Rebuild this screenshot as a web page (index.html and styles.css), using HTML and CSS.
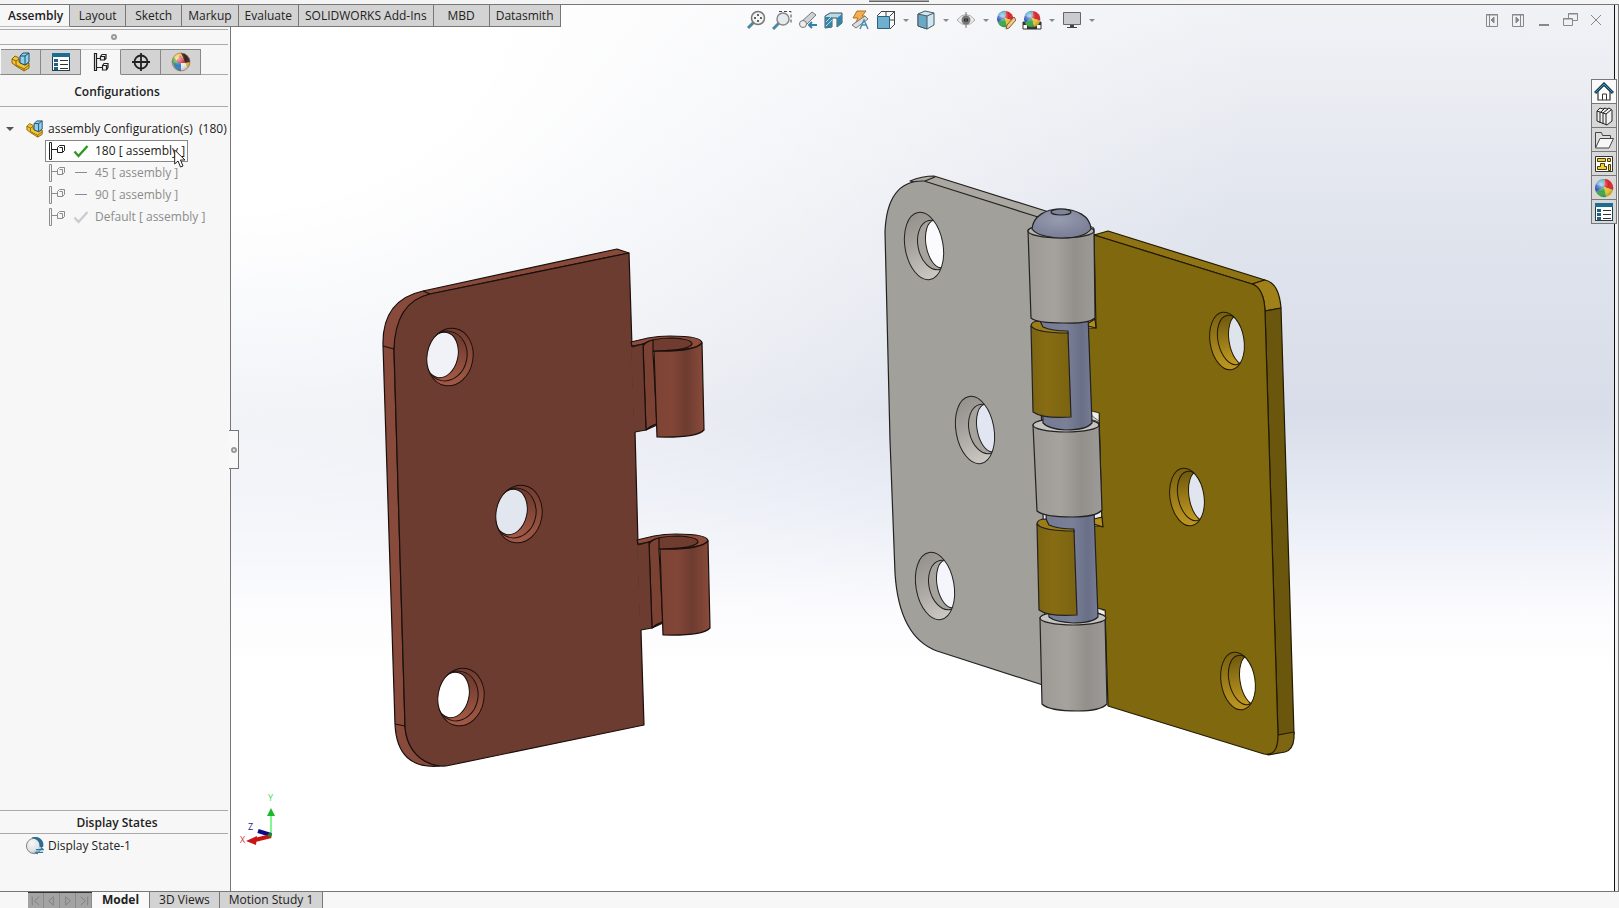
FILE: index.html
```html
<!DOCTYPE html>
<html lang="en">
<head>
<meta charset="utf-8">
<title>Assembly</title>
<link rel="stylesheet" href="styles.css">
</head>
<body>
<svg class="defs" aria-hidden="true">
  <defs>
    <radialGradient id="ballShade" cx=".35" cy=".3" r=".8"><stop offset="0" stop-color="#fff" stop-opacity=".65"/><stop offset=".5" stop-color="#fff" stop-opacity="0"/><stop offset="1" stop-color="#000" stop-opacity=".35"/></radialGradient>
    <symbol id="i-ball" viewBox="0 0 20 20"><path d="M10 9 2 6A9 9 0 0 1 11 1Z" fill="#3f9fc4"/><path d="M10 9 11 1A9 9 0 0 1 19 12Z" fill="#d8232a"/><path d="M10 9 19 12A9 9 0 0 1 12 19Z" fill="#e8c52e"/><path d="M10 9 12 19A9 9 0 0 1 2 14Z" fill="#3aa648"/><path d="M10 9 2 14A9 9 0 0 1 2 6Z" fill="#2e55b8"/><circle cx="10" cy="10" r="9" fill="url(#ballShade)"/></symbol>
    <symbol id="i-appear" viewBox="0 0 20 20"><circle cx="10" cy="10" r="9" fill="#e8c52e"/><path d="M10 1a9 9 0 0 1 9 9l-5 1Z" fill="#312023"/><path d="M9 3 15 11H4Z" fill="#d9283a"/><path d="M2 11h8v8A9 9 0 0 1 2 11Z" fill="#2f7fc0"/><path d="M1 10A9 9 0 0 1 3 5l4 6H1Z" fill="#4aa84e"/><path d="M10 11h4l3 5a9 9 0 0 1-7 3Z" fill="#e9ecef"/><circle cx="10" cy="10" r="9" fill="url(#ballShade)" stroke="#a4573c" stroke-width=".6"/></symbol>
    <symbol id="i-asm" viewBox="0 0 20 20"><path d="M1 7 4 4l4 2v4l6 3 4-2v5l-5 3-8-5-4-3Z" fill="#f4c430" stroke="#8a6508"/><path d="M1 7 5 9v4l8 4v2M13 17l5-4M5 9l3-2" fill="none" stroke="#8a6508"/><path d="M9 4 12 1h6v9l-4 3-5-2Z" fill="#8fd0ee" stroke="#1d4c68"/><path d="M9 4h5v9M14 4l4-3" fill="none" stroke="#1d4c68"/></symbol>
    <symbol id="i-list" viewBox="0 0 20 20"><rect x="1.500" y="1.500" width="17" height="17" fill="#fff" stroke="#1e4056"/><path d="M1 1h18v4H1Z" fill="#1d6d92"/><path d="M3 7h4v3H3Zm0 4h4v3H3Zm0 4h4v3H3Z" fill="#23607e"/><path d="M9 8.500h8M9 12.500h8M9 16.500h8" stroke="#333"/></symbol>
    <symbol id="i-conf" viewBox="0 0 20 20"><g fill="none" stroke="currentColor" stroke-width="1.200"><path d="M3.500 1v18M5.500 1v18M3 1.500h3M3 18.500h3M6 6.500h4M6 15.500h5"/><path d="M9.500 4.500 11 2.500h4v4L13.500 8h-4ZM9.500 4.500h4V8M11.500 13.500l1.500-2h4v4L15.500 18h-4ZM11.500 13.500h4V18"/></g></symbol>
    <symbol id="i-node" viewBox="0 0 18 18"><path d="M1.500.5h2v17h-2ZM4 7.500h5M9.500 5.500l2-2h5v5l-2 2h-5ZM11.500 5.500h3v5" fill="none" stroke="currentColor"/></symbol>
    <symbol id="i-target" viewBox="0 0 20 20"><circle cx="10" cy="10" r="6.500" fill="none" stroke="#222" stroke-width="1.800"/><path d="M10 1v18M1 10h18" stroke="#222" stroke-width="1.800"/></symbol>
    <symbol id="i-check" viewBox="0 0 16 16"><path d="M1.500 8.500 5.500 13 14.500 3" fill="none" stroke="currentColor" stroke-width="2.400"/></symbol>
    <symbol id="i-dash" viewBox="0 0 16 16"><path d="M2 7.500h12" stroke="currentColor"/></symbol>
  </defs>
</svg>

<header class="strip"><span class="strip-item"></span></header>

<main class="workspace">
  <nav class="ribbon">
    <button class="rtab rtab-active">Assembly</button><button class="rtab">Layout</button><button class="rtab">Sketch</button><button class="rtab">Markup</button><button class="rtab">Evaluate</button><button class="rtab">SOLIDWORKS Add-Ins</button><button class="rtab">MBD</button><button class="rtab">Datasmith</button>
  </nav>

  <aside class="panel">
    <div class="grip"><span class="dot"></span></div>
    <div class="ptabs">
      <button class="ptab" aria-label="Feature tree"><svg><use href="#i-asm"/></svg></button>
      <button class="ptab" aria-label="Properties"><svg><use href="#i-list"/></svg></button>
      <button class="ptab ptab-active" aria-label="Configurations"><svg><use href="#i-conf"/></svg></button>
      <button class="ptab" aria-label="Dimensions"><svg><use href="#i-target"/></svg></button>
      <button class="ptab" aria-label="Appearances"><svg><use href="#i-appear"/></svg></button>
    </div>
    <h2 class="title">Configurations</h2>
    <ul class="tree">
      <li class="root"><span class="twist"></span><svg class="big"><use href="#i-asm"/></svg><span>assembly Configuration(s)&nbsp; (180)</span></li>
      <li class="node node-on"><svg class="ico"><use href="#i-node"/></svg><svg class="mark mark-ok"><use href="#i-check"/></svg><span>180 [ assembly ]</span></li>
      <li class="node"><svg class="ico"><use href="#i-node"/></svg><svg class="mark"><use href="#i-dash"/></svg><span>45 [ assembly ]</span></li>
      <li class="node"><svg class="ico"><use href="#i-node"/></svg><svg class="mark"><use href="#i-dash"/></svg><span>90 [ assembly ]</span></li>
      <li class="node"><svg class="ico"><use href="#i-node"/></svg><svg class="mark mark-dim"><use href="#i-check"/></svg><span>Default [ assembly ]</span></li>
    </ul>
    <section class="states">
      <h2 class="title title-low">Display States</h2>
      <div class="state"><svg class="big" viewBox="0 0 20 20"><circle cx="9" cy="10" r="8.500" fill="#e3e7ea" stroke="#777"/><circle cx="9" cy="10" r="8" fill="url(#ballShade)"/><path d="M6 1a9 9 0 0 1 13 10l-4 0a9 9 0 0 0-9-10Z" fill="#2c6d8f"/><path d="M11 14h8l-2-2M19 17h-8l2 2" fill="none" stroke="#287ba7" stroke-width="1.500"/></svg><span>Display State-1</span></div>
    </section>
    <svg class="cursor" viewBox="0 0 12 19"><path d="M.7 1v14l3.300-3 2.500 6 2.500-1-2.500-6H11Z" fill="#fff" stroke="#222"/></svg>
  </aside>

  <section class="viewport">
    <svg class="scene" viewBox="231 5 1383 886" role="img" aria-label="Hinge assembly">
      <defs>
        <linearGradient id="redCyl"><stop offset="0" stop-color="#7d4334"/><stop offset=".35" stop-color="#824637"/><stop offset=".65" stop-color="#6d3c30"/><stop offset="1" stop-color="#8b4b3b"/></linearGradient>
        <linearGradient id="greyCyl"><stop offset="0" stop-color="#9d9a96"/><stop offset=".4" stop-color="#a6a39f"/><stop offset=".7" stop-color="#93908c"/><stop offset="1" stop-color="#9d9b97"/></linearGradient>
        <linearGradient id="pinCyl"><stop offset="0" stop-color="#747a93"/><stop offset=".5" stop-color="#7b8099"/><stop offset=".8" stop-color="#6a6f88"/><stop offset="1" stop-color="#777c94"/></linearGradient>
        <linearGradient id="goldCyl"><stop offset="0" stop-color="#7c6411"/><stop offset=".4" stop-color="#876c13"/><stop offset="1" stop-color="#7b6310"/></linearGradient>
        <linearGradient id="greyHole" x1="0" y1="0" x2=".4" y2="1"><stop offset="0" stop-color="#8b8884"/><stop offset=".5" stop-color="#a5a29e"/><stop offset="1" stop-color="#cbc8c4"/></linearGradient>
        <linearGradient id="redHole" x1="0" y1="0" x2="0" y2="1"><stop offset="0" stop-color="#6a382c"/><stop offset="1" stop-color="#a65b48"/></linearGradient>
        <linearGradient id="goldHole" x1="0" y1="0" x2="0" y2="1"><stop offset="0" stop-color="#6f590e"/><stop offset="1" stop-color="#c49c22"/></linearGradient>
        <radialGradient id="dome" cx=".45" cy=".35" r=".7"><stop offset="0" stop-color="#979cb0"/><stop offset="1" stop-color="#777c94"/></radialGradient>
        <clipPath id="cr"><ellipse cx="450" cy="357" rx="23" ry="29" transform="rotate(10 450 357)"/></clipPath>
        <clipPath id="cg"><ellipse cx="924" cy="246" rx="19" ry="34" transform="rotate(-10 924 246)"/></clipPath>
        <clipPath id="cy"><ellipse cx="1227" cy="341" rx="17" ry="29" transform="rotate(-9 1227 341)"/></clipPath>
        <g id="redRing"><g clip-path="url(#cr)"><path d="M420 320h60v70h-60Z" fill="url(#redHole)"/><ellipse cx="446" cy="356" rx="21" ry="25" fill="url(#redHole)" stroke="#1a0f0c" transform="rotate(10 446 356)"/><ellipse cx="442" cy="355" rx="16" ry="23" fill="currentColor" stroke="#1a0f0c" transform="rotate(12 442 355)"/></g><ellipse cx="450" cy="357" rx="23" ry="29" fill="none" stroke="#1a0f0c" transform="rotate(10 450 357)"/></g>
        <g id="greyRing"><g clip-path="url(#cg)"><path d="M900 205h50v80h-50Z" fill="url(#greyHole)"/><ellipse cx="934" cy="245" rx="16" ry="25" fill="#a5a39c" stroke="#222" transform="rotate(-12 934 245)"/><ellipse cx="938" cy="244" rx="12" ry="24" fill="currentColor" stroke="#222" transform="rotate(-10 938 244)"/></g><ellipse cx="924" cy="246" rx="19" ry="34" fill="none" stroke="#222" transform="rotate(-10 924 246)"/></g>
        <g id="goldRing"><g clip-path="url(#cy)"><path d="M1205 305h45v70h-45Z" fill="url(#goldHole)"/><ellipse cx="1232" cy="340" rx="14" ry="25" fill="url(#goldHole)" stroke="#221a00" transform="rotate(-12 1232 340)"/><ellipse cx="1241" cy="340" rx="12" ry="25" fill="currentColor" stroke="#221a00" transform="rotate(-9 1241 340)"/></g><ellipse cx="1227" cy="341" rx="17" ry="29" fill="none" stroke="#221a00" transform="rotate(-9 1227 341)"/></g>
        <g id="redKnuckle">
          <path d="M632 346 631 342 648 338Q658 336 670 336Q702 336 702 343Q701 350 654 351L643 344Z" fill="#8e4c3b"/>
          <path d="M643 344Q652 338 672 338Q692 339 692 344Q690 350 658 351L643 352Z" fill="#6f3c2f"/>
          <path d="M643 346Q647 341 653 340V352L657 425 646 430Z" fill="#7b4234"/>
          <path d="M631 347 643 344 646 430 634 432Z" fill="#6d3c30" stroke="none"/>
          <path d="M632 347 643 344 646 430 635 432" fill="none"/>
          <path d="M646 430Q650 426 656 424"/>
          <path d="M654 351Q694 352 702 343L704 430Q697 438 657 437Z" fill="url(#redCyl)"/>
        </g>
        <g id="wrap">
          <path d="M1031 326Q1031 321 1040 321L1043 327Q1052 331 1068 331V334Q1035 333 1031 326Z" fill="#9b7c15"/>
          <path d="M1031 326Q1036 333 1068 333L1071 417Q1043 419 1033 412Z" fill="url(#goldCyl)"/>
        </g>
      </defs>

      <g stroke="#1a0f0c" stroke-width="1.200" stroke-linejoin="round">
        <path d="M617 249 629 253 430 294Q398 302 394 350L405 726Q407 759 440 766Q397 770 395 724L383 345Q382 300 423 291Z" fill="#874a3b"/>
        <path d="M629 253 632 347 635 431 638 544 641 631 644 725 446 766Q432 767 420 758Q406 746 405 726L394 350Q395 302 430 294Z" fill="#6d3c30"/>
        <path d="M383 346 394 349M395 724 405 726M423 291 430 294" fill="none"/>
        <use href="#redKnuckle"/>
        <use href="#redKnuckle" transform="translate(6 198)"/>
      </g>
      <use href="#redRing" color="#f0f2f7"/>
      <use href="#redRing" color="#e2e6ee" transform="translate(69 157)"/>
      <use href="#redRing" color="#fff" transform="translate(11 340)"/>

      <g stroke="#222" stroke-width="1.200" stroke-linejoin="round">
        <path d="M910 181Q922 176 934 176L1049 212 1038 218 923 184Z" fill="#aaa8a0"/>
        <path d="M925 181 935 177" fill="none"/>
        <path d="M924 181 1038 217 1046 686 937 651Q899 637 895 573L890 440 885 232Q887 180 924 181Z" fill="#a2a09b"/>
      </g>
      <use href="#greyRing" color="#fbfbfd"/>
      <use href="#greyRing" color="#e2e6f2" transform="translate(51 184)"/>
      <use href="#greyRing" color="#f4f6fc" transform="translate(11 340)"/>

      <g stroke="#221a00" stroke-width="1.200" stroke-linejoin="round">
        <path d="M1094 235 1108 231 1265 280 1252 284Z" fill="#8f7315"/>
        <path d="M1252 284 1265 280Q1279 283 1281 308L1265 311Q1264 288 1252 284Z" fill="#a08018"/>
        <path d="M1265 311 1281 308 1294 734 1278 735Z" fill="#6b560d"/>
        <path d="M1278 735 1294 732V738Q1293 750 1285 752L1268 755Z" fill="#7e6512"/>
        <path d="M1094 235 1252 284Q1264 288 1265 311L1278 735Q1278 757 1264 754L1108 706 1105 610 1097 608 1094 526 1102 526 1099 413 1091 411 1088 328 1096 328Z" fill="#80680f"/>
        <path d="M1087 324 1095 319 1096 328 1088 326ZM1094 519 1102 517 1103 527 1094 524Z" fill="#b08d1c"/>
        <path d="M1091 411 1099 413V421L1092 416ZM1097 608 1105 611V616L1098 613Z" fill="#eee" stroke-width=".6"/>
      </g>
      <use href="#goldRing" color="#dfe3ec"/>
      <use href="#goldRing" color="#e1e5ef" transform="translate(-40 156)"/>
      <use href="#goldRing" color="#fff" transform="translate(11 340)"/>

      <g stroke="#222" stroke-width="1.200" stroke-linejoin="round">
        <path d="M1040 618Q1041 612 1072 611Q1105 611 1105 618L1107 704Q1100 711 1078 711Q1049 711 1042 704Z" fill="url(#greyCyl)"/>
        <ellipse cx="1073" cy="618" rx="33" ry="7" fill="#c5c4c1"/>
        <path d="M1046 510H1094L1098 617Q1092 623 1073 623Q1055 622 1049 617Z" fill="url(#pinCyl)"/>
        <use href="#wrap" transform="translate(6 198)"/>
        <path d="M1033 425Q1035 419 1065 418Q1099 418 1099 424L1102 510Q1096 517 1072 517Q1044 517 1037 511Z" fill="url(#greyCyl)"/>
        <ellipse cx="1066" cy="425" rx="33" ry="7" fill="#c5c4c1"/>
        <path d="M1040 315H1088L1092 423Q1086 430 1066 430Q1048 429 1043 423Z" fill="url(#pinCyl)"/>
        <use href="#wrap"/>
        <path d="M1028 230Q1031 225 1061 224Q1094 224 1094 229L1095 318Q1088 324 1063 323Q1037 323 1031 318Z" fill="url(#greyCyl)"/>
        <ellipse cx="1061" cy="231" rx="33" ry="7" fill="#b5b3af"/>
        <path d="M1032 229C1033 216 1046 209 1060 209C1077 209 1090 216 1091 229Q1085 238 1061 238Q1038 237 1032 229Z" fill="url(#dome)"/>
        <ellipse cx="1061" cy="212" rx="10" ry="3" fill="#7e849a"/>
      </g>
    </svg>

    <svg class="triad" viewBox="0 0 50 60"><path d="M34 48V26" stroke="#7dfa8b" stroke-width="2"/><path d="M30 28 34 20 38 28Z" fill="#19b92b"/><path d="M34 47 21 43" stroke="#0b0b8c" stroke-width="4"/><path d="M34 48 18 52" stroke="#c81414" stroke-width="4"/><path d="M20 48 9 53 19 57Z" fill="#c81414"/><circle cx="33" cy="47" r="2" fill="#1d8a1d"/><text x="31" y="13" fill="#48d95a">Y</text><text x="3" y="55" fill="#d03a3a">X</text><text x="11" y="42" fill="#23238f">Z</text></svg>

    <div class="hud">
      <button aria-label="Zoom to fit"><svg viewBox="0 0 20 20"><path d="M8 12 2 18" stroke="#4d88a3" stroke-width="3"/><circle cx="12" cy="8" r="6.500" fill="#f4f4f4" stroke="#777" stroke-width="1.500"/><path d="M12 4v2M12 10v2M8 8h2M14 8h2" stroke="#333" stroke-width="1.500"/></svg></button>
      <button aria-label="Zoom to area"><svg viewBox="0 0 20 20"><path d="M7 1.500h12V14" fill="none" stroke="#444" stroke-dasharray="3 2"/><path d="M7 13 1 19" stroke="#4d88a3" stroke-width="3"/><circle cx="11" cy="9" r="6" fill="#e5eaec" stroke="#888" stroke-width="1.500"/></svg></button>
      <button aria-label="Previous view"><svg viewBox="0 0 20 20"><path d="M2 13 14 2l4 3L8 15Z" fill="#cfd2d3" stroke="#777"/><circle cx="5" cy="14" r="3.500" fill="#eee" stroke="#777"/><path d="M19 15h-7M14 12l-3 3 3 3" fill="none" stroke="#3482ab" stroke-width="2"/></svg></button>
      <button aria-label="Section view"><svg viewBox="0 0 20 20"><path d="M1 6 6 3h12v10l-5 4V8H8v9l-7 1Z" fill="#b9dbe8" stroke="#42505a"/><path d="M1 7h7v10l-7 1ZM13 8l5-4v9l-5 4Z" fill="#3884a6"/><path d="m2 12 5-5M2 16l6-6" stroke="#b9dbe8"/></svg></button>
      <button aria-label="Annotation views"><svg viewBox="0 0 20 20"><path d="M3 8 7 1h9l-4 5h3L5 14l3-6Z" fill="#f2ae54" stroke="#b46e1d"/><path d="m2 15 13-9 3 3-12 9Z" fill="#ddd" stroke="#777"/><path d="m10 19 4-9 4 9M12 15h5" fill="none" stroke="#4d8fb0" stroke-width="1.500"/></svg></button>
      <button aria-label="View orientation"><svg viewBox="0 0 20 20"><path d="M5.500 1.500h13v13M1 6l5-5M14 6l5-5M14 19l5-5M10 1v6M14 10h5" fill="none" stroke="#444"/><path d="M1.500 6.500h12v12h-12Z" fill="#6fb0cf" stroke="#2a617d"/></svg></button>
      <button class="caret" aria-label="View orientation menu"></button>
      <button aria-label="Display style"><svg viewBox="0 0 20 20"><path d="m2 4 7-3 9 2v12l-7 4-9-3Z" fill="#cfe7f0" stroke="#4b5960"/><path d="m2 4 9 2v13l-9-3Z" fill="#69a9c5" stroke="#4b5960"/><path d="m11 6 7-3" stroke="#4b5960"/></svg></button>
      <button class="caret" aria-label="Display style menu"></button>
      <button aria-label="Hide or show items"><svg viewBox="0 0 20 20"><path d="M1 10q9-11 18 0-9 10-18 0Z" fill="#eee" stroke="#aaa"/><circle cx="10" cy="10" r="4.500" fill="#777"/><circle cx="10" cy="10" r="2" fill="#222"/><path d="M10 2v16" stroke="#777"/></svg></button>
      <button class="caret" aria-label="Hide or show menu"></button>
      <button aria-label="Edit appearance"><svg viewBox="0 0 20 20"><use href="#i-ball" width="18" height="18"/><path d="m10 19 1-4 7-8 2 3-7 8Z" fill="#f0c890" stroke="#8b5a2b"/></svg></button>
      <button aria-label="Apply scene"><svg viewBox="0 0 20 20"><path d="M1 12h18v7H1Z" fill="#fff" stroke="#333"/><path d="M1 12h4v3H1Zm4 3h5v4H5Zm10-3h4v3h-4Zm-5 3h5v4h-5Z" fill="#333"/><use href="#i-ball" x="1" width="18" height="18"/></svg></button>
      <button class="caret" aria-label="Apply scene menu"></button>
      <button aria-label="View settings"><svg viewBox="0 0 20 20"><path d="M1.500 2.500h17v12h-17Z" fill="#c9cbce" stroke="#666"/><path d="M8 15h4v2h3v1H5v-1h3Z" fill="#444"/></svg></button>
      <button class="caret" aria-label="View settings menu"></button>
    </div>

    <div class="wincon">
      <button aria-label="Collapse left"><svg viewBox="0 0 20 20"><path d="M4.500 4.500h11v12h-11ZM4 5h12M7.500 5v11" /><path d="m12 7-3 3 3 3Z" fill="#888"/></svg></button>
      <button aria-label="Collapse right"><svg viewBox="0 0 20 20"><path d="M4.500 4.500h11v12h-11ZM4 5h12M12.500 5v11"/><path d="m8 7 3 3-3 3Z" fill="#888"/></svg></button>
      <button aria-label="Minimize"><svg viewBox="0 0 20 20"><path d="M5 15h10" stroke-width="2"/></svg></button>
      <button aria-label="Restore"><svg viewBox="0 0 20 20"><path d="M8.500 8V3.500h9v7H13M3.500 8.500h9v7h-9ZM8 4h10M3 9h10"/></svg></button>
      <button aria-label="Close"><svg viewBox="0 0 20 20"><path d="m5 5 10 10M15 5 5 15"/></svg></button>
    </div>
    <button class="splitter" aria-label="Collapse panel"><span class="dot"></span></button>
  </section>

  <div class="edge"></div>

  <nav class="taskpane">
    <button class="task task-on" aria-label="Home"><svg viewBox="0 0 20 20"><path d="M4 9v9h12V9l-6-6Z" fill="#fff" stroke="#333" stroke-width="1.200"/><path d="M8.500 18v-6h4v6" fill="none" stroke="#333"/><path d="M1 11 10 2l9 9" fill="none" stroke="#173f52" stroke-width="3"/><path d="M1.500 10.500 10 2l8.500 8.500" fill="none" stroke="#3a9bc0"/></svg></button>
    <button class="task" aria-label="Design library"><svg viewBox="0 0 20 20"><path d="M3 5 6 2l3 1 2-1 2 1 2-1 3 2v11l-5 4-10-4Z" fill="#f1f1f1" stroke="#222"/><path d="M3 5 12 8v11M6 6v11M9 7v11M12 8l5-4M7 6l4-4M9 7l5-4" fill="none" stroke="#222"/></svg></button>
    <button class="task" aria-label="File explorer"><svg viewBox="0 0 20 20"><path d="M1.500 17V2.500h6l1 3h8V9" fill="#ddd" stroke="#444"/><path d="M1.500 18 6 8.500h13.500L15 18Z" fill="#f7f7f7" stroke="#444"/></svg></button>
    <button class="task" aria-label="View palette"><svg viewBox="0 0 20 20"><path d="M1.500 2.500h17v15h-17Z" fill="#fff" stroke="#333"/><path d="M3.500 4.500h8v3h-8Zm10 0h3v3h-3ZM3.500 12.500h3v-3h4v3h2v3h-9ZM14.500 10.500h2v6h-2Z" fill="#f2cf3a" stroke="#4b3c00"/></svg></button>
    <button class="task" aria-label="Appearances"><svg><use href="#i-ball"/></svg></button>
    <button class="task" aria-label="Custom properties"><svg><use href="#i-list"/></svg></button>
  </nav>
</main>

<footer class="sheetbar">
  <div class="steps"><button aria-label="First"><svg viewBox="0 0 16 14"><path d="M4.500 3v9M12 3 7 7.500l5 4.500"/></svg></button><button aria-label="Previous"><svg viewBox="0 0 16 14"><path d="M10 3 5 7.500l5 4.500Z"/></svg></button><button aria-label="Next"><svg viewBox="0 0 16 14"><path d="m6 3 5 4.500L6 12Z"/></svg></button><button aria-label="Last"><svg viewBox="0 0 16 14"><path d="M12.500 3v9M5 3l5 4.500L5 12"/></svg></button></div>
  <button class="sheet sheet-on">Model</button><button class="sheet">3D Views</button><button class="sheet">Motion Study 1</button>
</footer>
</body>
</html>
```
FILE: styles.css
```css
* { box-sizing: border-box; }
body {
  margin: 0;
  height: 100vh;
  display: flex;
  flex-direction: column;
  overflow: hidden;
  background: #f7f7f7;
  color: #222;
  font: 12px/16px "Open Sans", "Noto Sans", sans-serif;
}
button {
  margin: 0;
  padding: 0;
  border: 0;
  background: none;
  color: inherit;
  font: inherit;
}
button svg { display: block; }
.defs { position: absolute; width: 0; height: 0; }

.strip {
  flex: 0 0 5px;
  display: flex;
  justify-content: center;
  padding-left: 178px;
  border-bottom: 1px solid #777;
  background: #f4f4f4;
}
.strip-item { width: 60px; height: 2px; background: #aaa; border-bottom: 1px solid #666; }

.workspace {
  position: relative;
  flex: 1;
  min-height: 0;
  display: grid;
  grid-template-columns: 231px 1fr 5px;
}

.ribbon {
  position: absolute;
  z-index: 2;
  top: 0;
  left: 0;
  display: flex;
  height: 22px;
}
.rtab {
  min-width: 56px;
  padding: 0 6px;
  border-right: 1px solid #777;
  border-bottom: 1px solid #777;
  background: #d3d3d3;
  white-space: nowrap;
}
.rtab-active { padding: 0 6px 0 8px; background: #f7f7f7; border-bottom-color: #bbb; font-weight: 600; }

.panel {
  position: relative;
  display: flex;
  flex-direction: column;
  padding: 24px 2px 0 0;
  background: #f7f7f7;
  border-right: 1px solid #777;
}
.grip {
  display: flex;
  justify-content: center;
  align-items: center;
  height: 16px;
  border-top: 1px solid #aaa;
  border-bottom: 1px solid #aaa;
}
.dot { width: 6px; height: 6px; border: 2px solid #999; border-radius: 50%; }
.ptabs {
  display: flex;
  margin-top: 4px;
  height: 26px;
  padding-left: 1px;
  border-bottom: 1px solid #aaa;
}
.ptab {
  display: grid;
  place-items: center;
  width: 40px;
  height: 26px;
  border: 1px solid #888;
  border-left-width: 0;
  background: #d3d3d3;
}
.ptab-active { background: #f7f7f7; border-top-color: #ccc; border-bottom-color: #f7f7f7; }
.ptab svg { width: 20px; height: 20px; }
.title {
  margin: 0;
  padding: 9px 0 6px 6px;
  border-bottom: 1px solid #aaa;
  font-size: 12px;
  line-height: 16px;
  font-weight: 600;
  text-align: center;
}
.tree { flex: 1; margin: 0; padding: 11px 0 0; list-style: none; }
.root { display: flex; align-items: center; height: 22px; padding-left: 6px; white-space: nowrap; }
.twist { width: 20px; }
.twist::before {
  content: "";
  display: block;
  width: 0;
  border: 4px solid transparent;
  border-top-color: #555;
  border-bottom: 0;
}
.big { width: 18px; height: 18px; margin-right: 4px; }
.node {
  display: flex;
  align-items: center;
  width: max-content;
  height: 22px;
  margin-left: 45px;
  padding: 0 2px;
  border: 1px solid transparent;
  color: #8c8c8c;
}
.node-on { border-color: #888; background: #fff; color: #222; }
.ico { width: 18px; height: 18px; }
.mark { width: 16px; height: 16px; margin: 0 6px 0 7px; }
.mark-ok { color: #2f9a1f; }
.mark-dim { color: #ccc; }
.states { height: 81px; border-top: 1px solid #aaa; }
.title-low { padding: 4px 0 2px 6px; }
.state { display: flex; align-items: center; height: 24px; padding-left: 26px; }
.cursor { position: absolute; top: 144px; left: 174px; width: 12px; height: 19px; }

.viewport {
  position: relative;
  min-width: 0;
  min-height: 0;
  background:
    radial-gradient(ellipse 75% 90% at 0 0, #fff 25%, transparent 100%),
    linear-gradient(#f1f2f6 0, #e0e4ed 25%, #d9dde9 46%, #e5e9f3 55%, #fbfbfe 68%, #fff 75%);
}
.scene { display: block; width: 100%; height: 100%; }
.triad { position: absolute; left: 6px; bottom: 43px; width: 50px; height: 60px; }
.triad text { font-size: 9px; }
.hud {
  position: absolute;
  top: 3px;
  left: 0;
  right: 4px;
  display: flex;
  justify-content: center;
}
.hud button, .wincon button { display: grid; place-items: center; width: 26px; height: 24px; }
.hud svg { width: 20px; height: 20px; }
.hud .caret { width: 14px; }
.caret::before {
  content: "";
  border: 3px solid transparent;
  border-top-color: #888;
  border-bottom: 0;
}
.wincon { position: absolute; top: 3px; right: 5px; display: flex; }
.wincon svg { width: 20px; height: 20px; fill: none; stroke: #888; stroke-width: 1; }
.splitter {
  position: absolute;
  top: 48%;
  left: -2px;
  display: grid;
  place-items: center;
  width: 10px;
  height: 39px;
  border: 1px solid #777;
  border-left: 0;
  background: #f9f9f9;
}
.edge { border-left: 1px solid #111; background: #f2f2f2; border-right: 1px solid #777; }
.taskpane {
  position: absolute;
  top: 74px;
  right: 2px;
  width: 26px;
  border: 1px solid #777;
  border-bottom: 0;
}
.task {
  display: grid;
  place-items: center;
  width: 100%;
  height: 24px;
  border-bottom: 1px solid #777;
  background: #d8d8d8;
}
.task-on { background: #fafafa; }
.task svg { width: 20px; height: 20px; }

.sheetbar {
  flex: 0 0 17px;
  display: flex;
  padding-left: 28px;
  border-top: 1px solid #777;
  background: #f7f7f7;
}
.steps { display: flex; background: #a3a3a3; border-top: 1px solid #333; }
.steps button { width: 16px; border-right: 1px solid #8a8a8a; }
.steps svg { width: 15px; height: 13px; fill: none; stroke: #808080; }
.sheet {
  padding: 0 9px;
  border-right: 1px solid #777;
  background: #d3d3d3;
  line-height: 16px;
  white-space: nowrap;
}
.sheet-on { padding: 0 10px; background: #f9f9f9; font-weight: 700; }
```
